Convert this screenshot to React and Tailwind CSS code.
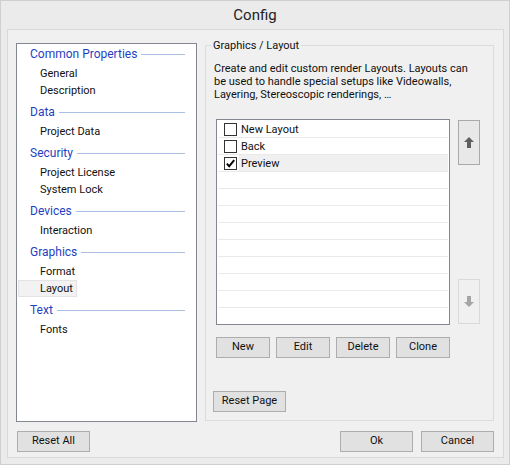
import React from "react";

const FONT = { fontFamily: 'Roboto, "Noto Sans", sans-serif' };

function Header({ children, first }) {
  return (
    <div className={`${first ? "h-[21px] pt-[2px]" : "h-[24px] pt-[5px]"}`}>
      <div className="flex items-center h-[17px] pl-[13px] pr-[11px]">
        <span className="text-[12px] leading-[17px] text-[#1f3fbf] whitespace-nowrap">{children}</span>
        <div className="flex-1 h-px bg-[#abbfe2] ml-[4px]" />
      </div>
    </div>
  );
}

function Item({ children, selected }) {
  return (
    <div className="h-[17px]">
      {selected ? (
        <div className="ml-[1px] w-fit h-[17px] pl-[21px] pr-[3px] bg-[#f2f2f2] border border-[#e3e3e3] text-[11px] leading-[15px] text-[#111]">
          {children}
        </div>
      ) : (
        <div className="pl-[23px] text-[11px] leading-[17px] text-[#111]">{children}</div>
      )}
    </div>
  );
}

function Btn({ children, className = "" }) {
  return (
    <div
      className={`h-[21px] flex items-center justify-center bg-[#e1e1e1] border border-[#adadad] text-[11px] text-[#111] ${className}`}
    >
      {children}
    </div>
  );
}

function Check({ checked }) {
  return (
    <div className="w-[13px] h-[13px] border border-[#333] bg-white flex items-center justify-center">
      {checked && (
        <svg width="11" height="11" viewBox="0 0 11 11">
          <path d="M1.8 5.6 L4.2 8.2 L9.2 2.2" fill="none" stroke="#000" strokeWidth="1.9" />
        </svg>
      )}
    </div>
  );
}

function Row({ label, checked, highlight, line = true }) {
  return (
    <div className={`h-[17px] shrink-0 flex items-center ${line ? "border-b border-[#e9e9e9]" : ""} mx-[1px]`}>
      <div className="w-[21px] flex justify-center pl-[3px] pt-[1px] h-full items-center bg-white">
        {label !== undefined && <Check checked={checked} />}
      </div>
      <div
        className={`flex-1 h-full flex items-center pl-[2px] pt-[2px] text-[11px] text-[#111] ${
          highlight ? "bg-[#f0f0f0]" : ""
        }`}
      >
        {label}
      </div>
    </div>
  );
}

function Arrow({ up, color }) {
  return (
    <svg width="10" height="11" viewBox="0 0 10 11" style={{ transform: up ? "none" : "rotate(180deg)" }}>
      <polygon points="5,0 10,5 7,5 7,11 3,11 3,5 0,5" fill={color} />
    </svg>
  );
}

export default function App() {
  const rows = [
    { label: "New Layout" },
    { label: "Back" },
    { label: "Preview", checked: true, highlight: true },
  ];
  const empties = Array.from({ length: 9 });
  return (
    <div style={FONT} className="w-[510px] h-[465px] bg-[#ebebeb] border border-[#cfcfcf] flex flex-col">
      <div className="h-[28px] flex items-center justify-center text-[15px] text-[#222] pt-[1px]">Config</div>
      <div className="ml-[6px] w-[497px] h-[429px] border border-[#d9d9d9] bg-[#f0f0f0] flex flex-col pt-[13px] pl-[8px] pr-[9px] pb-[5px]">
        <div className="flex gap-[8px] h-[379px]">
          {/* Left tree */}
          <div className="w-[181px] h-[379px] bg-white border border-[#828790]">
            <Header first>Common Properties</Header>
            <Item>General</Item>
            <Item>Description</Item>
            <Header>Data</Header>
            <Item>Project Data</Item>
            <Header>Security</Header>
            <Item>Project License</Item>
            <Item>System Lock</Item>
            <Header>Devices</Header>
            <Item>Interaction</Item>
            <Header>Graphics</Header>
            <Item>Format</Item>
            <Item selected>Layout</Item>
            <Header>Text</Header>
            <Item>Fonts</Item>
          </div>
          {/* Group box */}
          <div className="w-[289px] h-[376px] mt-[2px] border border-[#dcdcdc] flex flex-col">
            <div className="-mt-[8px] ml-[5px] px-[2px] w-fit h-[16px] leading-[16px] bg-[#f0f0f0] text-[11px] text-[#111]">
              Graphics / Layout
            </div>
            <div className="mt-[8px] pl-[8px] text-[11px] leading-[13px] text-[#111] whitespace-nowrap">
              Create and edit custom render Layouts. Layouts can
              <br />
              be used to handle special setups like Videowalls,
              <br />
              Layering, Stereoscopic renderings, …
            </div>
            <div className="mt-[18px] ml-[10px] flex gap-[8px]">
              <div className="w-[234px] h-[206px] bg-white border border-[#828790] pt-[1px] overflow-hidden flex flex-col">
                {rows.map((r) => (
                  <Row key={r.label} {...r} />
                ))}
                {empties.map((_, i) => (
                  <Row key={i} line={i < 8} />
                ))}
              </div>
              <div className="w-[22px] h-[206px] flex flex-col justify-between py-[1px]">
                <div className="h-[45px] bg-[#e8e8e8] border border-[#a9a9a9] flex items-center justify-center">
                  <Arrow up color="#5f5f5f" />
                </div>
                <div className="h-[45px] bg-[#f0f0f0] border border-[#d9d9d9] flex items-center justify-center">
                  <Arrow color="#a5a5a5" />
                </div>
              </div>
            </div>
            <div className="mt-[12px] ml-[10px] flex gap-[6px]">
              <Btn className="w-[54px]">New</Btn>
              <Btn className="w-[54px]">Edit</Btn>
              <Btn className="w-[54px]">Delete</Btn>
              <Btn className="w-[54px]">Clone</Btn>
            </div>
            <div className="mt-[33px] ml-[7px]">
              <Btn className="w-[73px]">Reset Page</Btn>
            </div>
          </div>
        </div>
        <div className="mt-[9px] flex items-center">
          <Btn className="w-[73px] ml-[1px]">Reset All</Btn>
          <div className="flex-1" />
          <Btn className="w-[73px]">Ok</Btn>
          <Btn className="w-[73px] ml-[8px]">Cancel</Btn>
        </div>
      </div>
    </div>
  );
}
